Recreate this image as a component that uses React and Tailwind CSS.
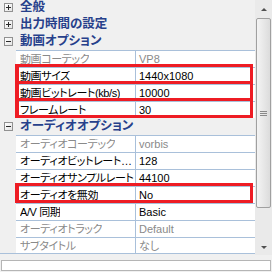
const rows = [
  { cat: "全般", open: false },
  { cat: "出力時間の設定", open: false },
  { cat: "動画オプション", open: true },
  { name: "動画コーデック", value: "VP8", disabled: true },
  { name: "動画サイズ", value: "1440x1080", mark: true },
  { name: "動画ビットレート(kb/s)", value: "10000", mark: true },
  { name: "フレームレート", value: "30", mark: true },
  { cat: "オーディオオプション", open: true },
  { name: "オーディオコーデック", value: "vorbis", disabled: true },
  { name: "オーディオビットレート(kb/s)", value: "128" },
  { name: "オーディオサンプルレート", value: "44100" },
  { name: "オーディオを無効", value: "No", mark: true },
  { name: "A/V 同期", value: "Basic" },
  { name: "オーディオトラック", value: "Default", disabled: true },
  { name: "サブタイトル", value: "なし", disabled: true },
];

function ToggleBox({ open }) {
  return (
    <div className="w-[9px] h-[9px] border border-[#919191] bg-gradient-to-br from-white to-[#e4e4e4] flex items-center justify-center relative">
      <div className="absolute w-[5px] h-px bg-[#2b2b2b]" />
      {!open && <div className="absolute w-px h-[5px] bg-[#2b2b2b]" />}
    </div>
  );
}

function CategoryRow({ label, open }) {
  return (
    <div className="h-[17px] flex items-center bg-[#f0f0f0]">
      <div className="w-4 pl-1 flex items-center">
        <ToggleBox open={open} />
      </div>
      <div className="pl-1 text-[12.5px] font-bold text-[#27408b] leading-none">
        {label}
      </div>
    </div>
  );
}

function PropertyRow({ name, value, disabled, mark }) {
  const tone = disabled ? "text-[#8a8a8a]" : "text-black";
  return (
    <div className="h-[17px] flex relative">
      <div className="w-4 bg-[#f0f0f0]" />
      <div className="flex-1 flex border-t border-[#a9c0da] bg-white min-w-0">
        <div
          className={`w-[120px] shrink-0 overflow-hidden border-r border-[#a9c0da] pl-1 pr-px flex items-center text-[11px] leading-none tracking-[-0.4px] ${tone}`}
        >
          <span className="block truncate">{name}</span>
        </div>
        <div className={`flex-1 pl-[3px] flex items-center text-[11px] leading-none ${tone}`}>
          {value}
        </div>
      </div>
      {mark && (
        <div className="absolute left-[15px] right-[2px] top-[-3px] h-[20px] border-[3px] border-l-4 border-[#ee1c24] pointer-events-none" />
      )}
    </div>
  );
}

function ScrollBar() {
  return (
    <div className="w-[17px] h-full bg-[#eaeaea] flex flex-col items-center">
      <div className="h-[18px] flex items-center justify-center">
        <div className="w-0 h-0 border-l-[3px] border-r-[3px] border-b-[3px] border-l-transparent border-r-transparent border-b-[#505050]" />
      </div>
      <div className="w-[15px] h-[190px] rounded-[2px] border border-[#a0a0a0] bg-gradient-to-r from-[#f4f4f4] to-[#dcdcdc] flex flex-col items-center justify-center gap-px">
        <div className="w-[7px] h-px bg-[#8a8a8a]" />
        <div className="w-[7px] h-px bg-[#8a8a8a]" />
        <div className="w-[7px] h-px bg-[#8a8a8a]" />
      </div>
      <div className="flex-1 flex items-end justify-center pb-[6px]">
        <div className="w-0 h-0 border-l-[3px] border-r-[3px] border-t-[3px] border-l-transparent border-r-transparent border-t-[#505050]" />
      </div>
    </div>
  );
}

export default function App() {
  return (
    <div
      className="w-[272px] h-[272px] bg-[#f0f0f0] overflow-hidden flex flex-col [font-feature-settings:'palt']"
      style={{ fontFamily: '"Liberation Sans", "Noto Sans CJK JP", sans-serif' }}
    >
      <div className="h-[255px] flex">
        <div className="w-[255px] h-[254px] border-b border-[#a9c0da] overflow-hidden">
          <div className="mt-[-1px]">
            {rows.map((r, i) =>
              r.cat ? (
                <CategoryRow key={i} label={r.cat} open={r.open} />
              ) : (
                <PropertyRow key={i} {...r} />
              )
            )}
          </div>
        </div>
        <ScrollBar />
      </div>
      <div className="px-px pt-[5px]">
        <div className="h-[11px] border border-[#b5b5b5] bg-white" />
      </div>
    </div>
  );
}
